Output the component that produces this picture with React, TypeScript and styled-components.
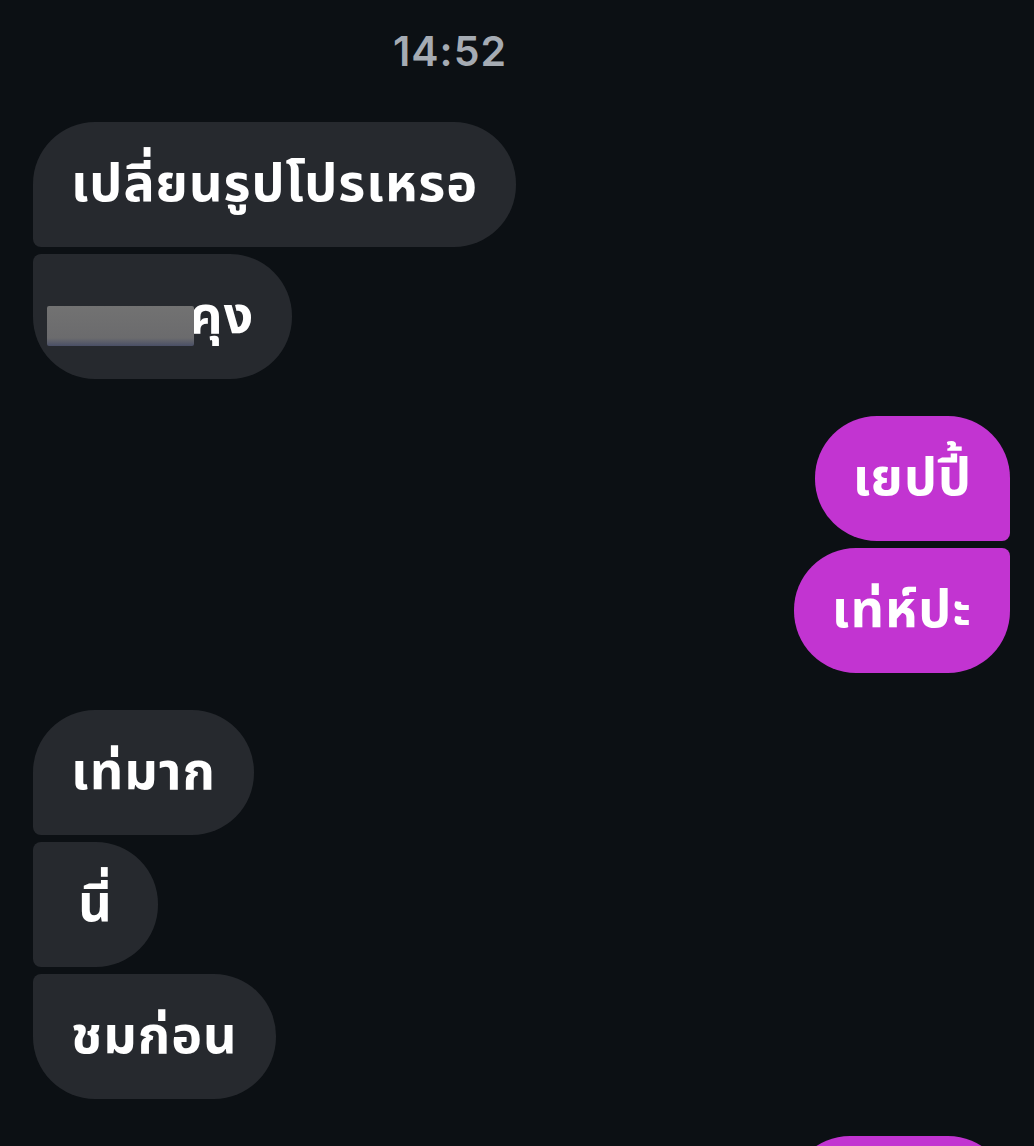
import React from "react";
import styled, { createGlobalStyle } from "styled-components";

const GlobalStyle = createGlobalStyle`
  html, body {
    margin: 0;
    padding: 0;
    background: #0c1014;
  }
  body {
    font-family: "Noto Sans Thai", "Noto Sans", "DejaVu Sans", sans-serif;
  }
`;

const Screen = styled.div`
  display: flex;
  flex-direction: column;
  padding: 26px 24px 0 33px;
  min-height: 1146px;
  box-sizing: border-box;
`;

const Timestamp = styled.div`
  padding-right: 143px;
  text-align: center;
  color: #a5abb3;
  font-family: "Inter", "Liberation Sans", sans-serif;
  font-size: 41px;
  font-weight: 600;
  letter-spacing: 1px;
  line-height: 50px;
  margin-bottom: 46px;
`;

const Group = styled.div<{ $mine?: boolean }>`
  display: flex;
  flex-direction: column;
  align-items: ${(p) => (p.$mine ? "flex-end" : "flex-start")};
  gap: 7px;
  margin-bottom: 37px;
`;

type Pos = "single" | "first" | "middle" | "last";

const radius = (mine: boolean, pos: Pos) => {
  const big = "62px";
  const small = "8px";
  const top = pos === "single" || pos === "first" ? big : small;
  const bottom = pos === "single" || pos === "last" ? big : small;
  return mine
    ? `${big} ${top} ${bottom} ${big}`
    : `${top} ${big} ${big} ${bottom}`;
};

const Bubble = styled.div<{ $mine?: boolean; $pos: Pos }>`
  display: flex;
  align-items: center;
  justify-content: center;
  min-width: 125px;
  height: 125px;
  padding: 0 38px;
  box-sizing: border-box;
  background: ${(p) => (p.$mine ? "#c234d1" : "#26292e")};
  border-radius: ${(p) => radius(!!p.$mine, p.$pos)};
  color: #ffffff;
  font-size: 52px;
  font-weight: 700;
  letter-spacing: 1px;
  white-space: nowrap;
`;

const Redacted = styled.span`
  display: inline-block;
  flex-shrink: 0;
  width: 147px;
  height: 40px;
  margin: 18px -5px 0 -24px;
  border-radius: 2px;
  background: linear-gradient(180deg, #727272 0%, #6b6b6d 80%, #4a4f66 100%);
  filter: blur(0.6px);
`;

const App: React.FC = () => {
  return (
    <>
      <GlobalStyle />
      <Screen>
        <Timestamp>14:52</Timestamp>
        <Group>
          <Bubble $pos="first">เปลี่ยนรูปโปรเหรอ</Bubble>
          <Bubble $pos="last">
            <Redacted />
            คุง
          </Bubble>
        </Group>
        <Group $mine>
          <Bubble $mine $pos="first">เยปปี้</Bubble>
          <Bubble $mine $pos="last">เท่ห์ปะ</Bubble>
        </Group>
        <Group>
          <Bubble $pos="first">เท่มาก</Bubble>
          <Bubble $pos="middle">นี่</Bubble>
          <Bubble $pos="last">ชมก่อน</Bubble>
        </Group>
        <Group $mine>
          <Bubble $mine $pos="first">ขอบใจ</Bubble>
        </Group>
      </Screen>
    </>
  );
};

export default App;
